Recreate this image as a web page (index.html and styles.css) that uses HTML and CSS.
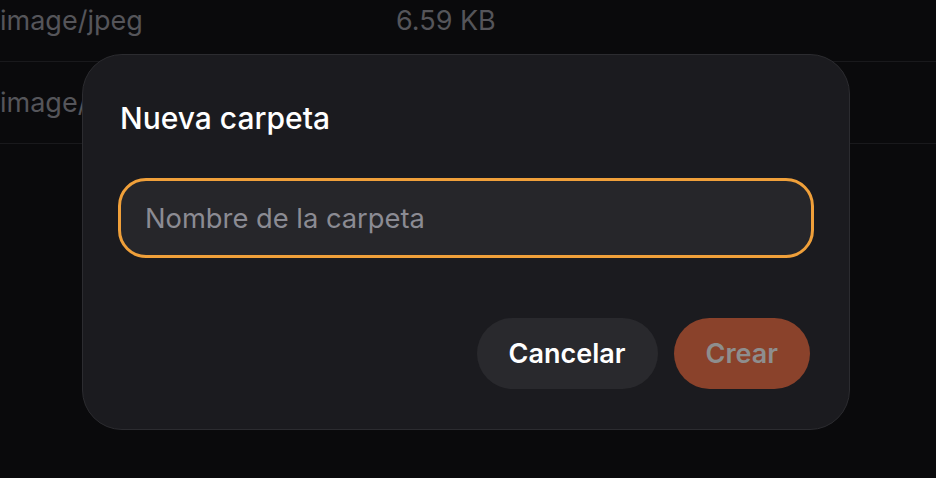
FILE: index.html
```html
<!DOCTYPE html>
<html lang="es">
<head>
<meta charset="utf-8">
<title>Nueva carpeta</title>
<link rel="stylesheet" href="styles.css">
</head>
<body>
<div class="table">
  <div class="row"><span class="col-type">image/jpeg</span><span class="col-size">6.59 KB</span></div>
  <div class="row"><span class="col-type">image/png</span><span class="col-size">12.4 KB</span></div>
</div>
<div class="overlay">
  <div class="modal" role="dialog">
    <h2 class="modal-title">Nueva carpeta</h2>
    <input class="field" type="text" placeholder="Nombre de la carpeta">
    <div class="actions">
      <button class="btn btn-cancel">Cancelar</button>
      <button class="btn btn-create" disabled>Crear</button>
    </div>
  </div>
</div>
</body>
</html>
```
FILE: styles.css
```css
* { box-sizing: border-box; }
html, body {
  margin: 0;
  height: 100%;
  background: #0a0a0c;
  font-family: Inter, "Noto Sans", "Liberation Sans", sans-serif;
  overflow: hidden;
}
.table {
  margin-top: -20px;
}
.row {
  height: 82px;
  display: flex;
  align-items: center;
  border-bottom: 1px solid #19191c;
  font-size: 27px;
  color: #55555a;
}
.col-type {
  width: 396px;
}
.col-size {
  flex: 1;
}
.overlay {
  position: fixed;
  inset: 0;
  display: flex;
  align-items: flex-start;
  padding-left: 82px;
  padding-top: 54px;
}
.modal {
  width: 768px;
  background: #1b1b1f;
  border: 1px solid #2c2c30;
  border-radius: 40px;
  padding: 46px 35px 40px 35px;
  display: flex;
  flex-direction: column;
}
.modal-title {
  margin: 0;
  font-size: 30px;
  font-weight: 500;
  line-height: 34px;
  color: #ffffff;
  padding-left: 2px;
}
.field {
  margin-top: 43px;
  height: 80px;
  width: 100%;
  background: #26262a;
  border: 3px solid #f0a03a;
  border-radius: 28px;
  padding: 0 24px;
  font-family: inherit;
  font-size: 27.3px;
  color: #ffffff;
  outline: none;
}
.field::placeholder {
  color: #8b8b93;
}
.actions {
  margin-top: 60px;
  display: flex;
  justify-content: flex-end;
  gap: 16px;
  padding-right: 4px;
}
.btn {
  height: 71px;
  border: none;
  border-radius: 36px;
  padding: 0 32px;
  font-family: inherit;
  font-size: 27px;
  font-weight: 600;
}
.btn-cancel {
  background: #29292d;
  color: #ffffff;
}
.btn-create {
  background: #8a422b;
  color: #8e8e8e;
}
```
